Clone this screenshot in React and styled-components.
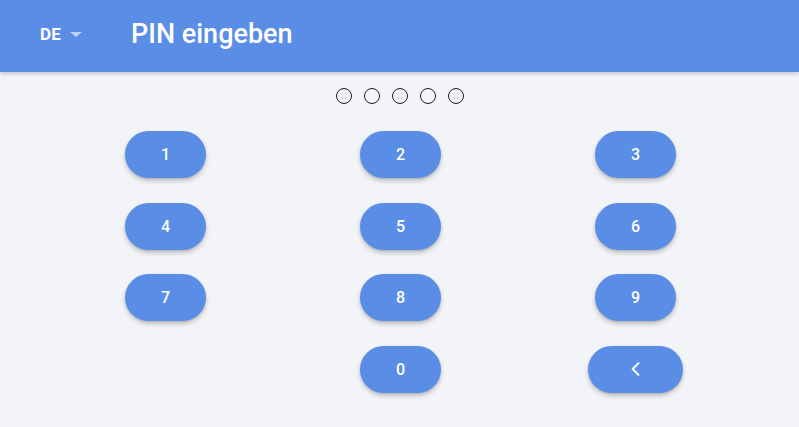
import React, { useState } from 'react'
import styled, { createGlobalStyle } from 'styled-components'

const GlobalStyle = createGlobalStyle`
  body {
    margin: 0;
    background: #f3f4f8;
    font-family: Roboto, "Noto Sans", sans-serif;
  }
`

const Page = styled.div`
  width: 799px;
  height: 427px;
  background: #f3f4f8;
  overflow: hidden;
`

const Header = styled.header`
  height: 72px;
  box-sizing: border-box;
  padding-bottom: 4px;
  background: #5a8de6;
  display: flex;
  align-items: center;
  box-shadow: 0 2px 4px rgba(0, 0, 0, 0.18);
  color: #fff;
`

const Lang = styled.button`
  display: flex;
  align-items: center;
  gap: 9px;
  margin-left: 40px;
  padding: 0;
  border: none;
  background: none;
  color: #fff;
  font-family: inherit;
  font-size: 17px;
  font-weight: 700;
  letter-spacing: 0.2px;
`

const Caret = styled.span`
  width: 0;
  height: 0;
  margin-top: 1px;
  border-left: 6.5px solid transparent;
  border-right: 6.5px solid transparent;
  border-top: 5.5px solid rgba(255, 255, 255, 0.6);
`

const Title = styled.h1`
  margin: 0 0 0 49px;
  font-size: 27px;
  font-weight: 500;
`

const Dots = styled.div`
  display: flex;
  justify-content: center;
  gap: 12px;
  padding-top: 16px;
  height: 43px;
  box-sizing: border-box;
`

const Dot = styled.span`
  width: 16px;
  height: 16px;
  box-sizing: border-box;
  border-radius: 50%;
  border: 1.6px solid #1e1e1e;
  background: ${p => (p.filled ? '#1e1e1e' : 'transparent')};
`

const Pad = styled.div`
  display: grid;
  grid-template-columns: repeat(3, 235px);
  row-gap: 24.5px;
  padding: 16px 47px 0 48px;
  justify-items: center;
`

const Key = styled.button`
  width: ${p => (p.wide ? '95px' : '81px')};
  height: 47px;
  border: none;
  border-radius: 24px;
  background: #5a8de6;
  color: #fff;
  font-family: inherit;
  font-size: 16px;
  font-weight: 500;
  display: flex;
  align-items: center;
  justify-content: center;
  box-shadow: 0 3px 5px rgba(0, 0, 0, 0.2), 0 1px 2px rgba(0, 0, 0, 0.12);
  cursor: pointer;
`

const Empty = styled.span``

export default function App() {
  const [pin, setPin] = useState('')

  const press = d => {
    if (pin.length < 5) setPin(pin + d)
  }

  return (
    <Page>
      <GlobalStyle />
      <Header>
        <Lang>
          DE
          <Caret />
        </Lang>
        <Title>PIN eingeben</Title>
      </Header>
      <Dots>
        {[0, 1, 2, 3, 4].map(i => (
          <Dot key={i} filled={i < pin.length} />
        ))}
      </Dots>
      <Pad>
        {['1', '2', '3', '4', '5', '6', '7', '8', '9'].map(d => (
          <Key key={d} onClick={() => press(d)}>{d}</Key>
        ))}
        <Empty />
        <Key onClick={() => press('0')}>0</Key>
        <Key wide onClick={() => setPin(pin.slice(0, -1))}>
          <svg width="20" height="20" viewBox="0 0 24 24" fill="none" stroke="#fff" strokeWidth="2.4" strokeLinecap="round" strokeLinejoin="round">
            <path d="M15 5 8 12l7 7" />
          </svg>
        </Key>
      </Pad>
    </Page>
  )
}
